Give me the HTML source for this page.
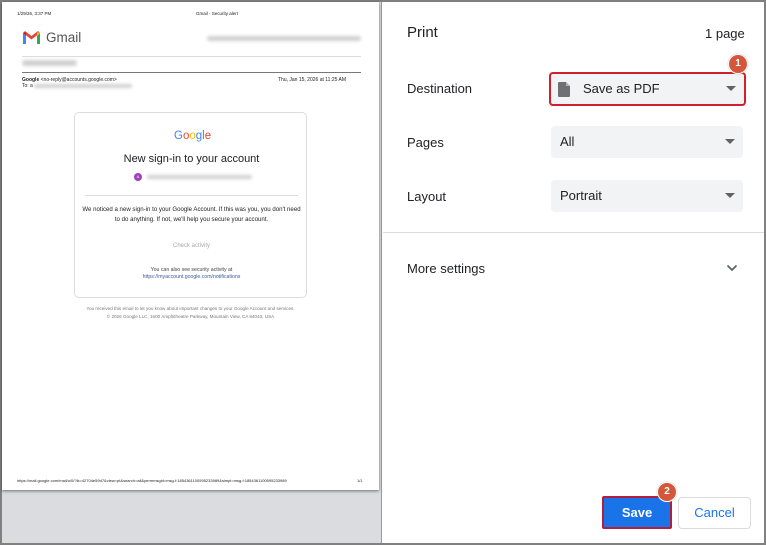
<!DOCTYPE html>
<html><head><meta charset="utf-8"><style>
*{box-sizing:border-box;margin:0;padding:0}
body{width:766px;height:545px;overflow:hidden;background:#808080;font-family:"Liberation Sans",Arial,sans-serif;position:relative}
.frame{position:absolute;left:2px;top:2px;width:762px;height:541px;background:#fff}
.prev{position:absolute;left:0;top:0;width:380px;height:541px;background:#dadce0;border-right:1px solid #9a9a9a}
.page{position:absolute;left:0;top:0;width:377px;height:488px;background:#fff;box-shadow:0 1px 3px rgba(0,0,0,.5)}
.t{position:absolute;white-space:nowrap;color:#222}
.blur{position:absolute;background:#d0d0d0;border-radius:3px;filter:blur(1.5px)}
.card{position:absolute;left:72px;top:110px;width:233px;height:186px;border:1px solid #dadce0;border-radius:5px}
.lbl{position:absolute;left:24px;font-size:13px;color:#202124}
.right{position:absolute;left:381px;top:0;width:381px;height:541px}
.sel{position:absolute;left:168px;width:192px;height:32px;background:#f1f3f4;border-radius:4px;font-size:13px;color:#202124}
.sel span{position:absolute;left:9px;top:8px}
.arr{position:absolute;right:8px;top:13px;width:0;height:0;border-left:5px solid transparent;border-right:5px solid transparent;border-top:5px solid #5f6368}
.badge{position:absolute;width:20px;height:20px;border-radius:50%;background:#d4573a;color:#fff;font-size:10px;font-weight:bold;text-align:center;line-height:18px;border:1.5px solid #fff;box-shadow:0 0 1px #888}
</style></head><body><div class="frame">
<div class="prev"><div class="page">
<div class="t" style="left:15px;top:9px;font-size:4.5px">1/29/26, 3:37 PM</div>
<div class="t" style="left:194px;top:9px;font-size:4.5px">Gmail - Security alert</div>
<svg style="position:absolute;left:20px;top:28px" width="19" height="15" viewBox="0 0 19 15"><path d="M1 3v11h3V6z" fill="#4285f4"/><path d="M15 6v8h3V3z" fill="#34a853"/><path d="M1 3l8.5 6.5L18 3 16 1 9.5 6 3 1z" fill="#ea4335"/><path d="M15 6V2l3 1z" fill="#fbbc04"/><path d="M1 3l3 3V2z" fill="#c5221f"/></svg>
<div class="t" style="left:44px;top:28px;font-size:13.5px;color:#555">Gmail</div>
<div class="blur" style="left:205px;top:34px;width:154px;height:5px"></div>
<div style="position:absolute;left:20px;top:54px;width:339px;border-top:1px solid #ddd"></div>
<div class="blur" style="left:20px;top:58px;width:55px;height:6px"></div>
<div style="position:absolute;left:20px;top:70px;width:339px;border-top:1px solid #777"></div>
<div class="t" style="left:20px;top:75px;font-size:5px"><b>Google</b> &lt;no-reply@accounts.google.com&gt;</div>
<div class="t" style="left:20px;top:81px;font-size:5px">To: a</div>
<div class="blur" style="left:32px;top:82px;width:98px;height:4px"></div>
<div class="t" style="left:276px;top:75px;font-size:5px">Thu, Jan 15, 2026 at 11:25 AM</div>
<div class="card">
<div class="t" style="left:99px;top:17px;font-size:11.5px"><span style="color:#4285f4">G</span><span style="color:#ea4335">o</span><span style="color:#fbbc04">o</span><span style="color:#4285f4">g</span><span style="color:#34a853">l</span><span style="color:#ea4335">e</span></div>
<div class="t" style="left:0;width:233px;text-align:center;top:40px;font-size:11px;color:#202124">New sign-in to your account</div>
<div style="position:absolute;left:59px;top:60px;width:8px;height:8px;border-radius:50%;background:#a040c0;color:#fff;font-size:4px;text-align:center;line-height:8px">A</div>
<div class="blur" style="left:72px;top:62px;width:105px;height:4px"></div>
<div style="position:absolute;left:10px;top:82px;width:213px;border-top:1px solid #ddd"></div>
<div class="t" style="left:6px;top:92px;font-size:6.1px;line-height:9.5px;text-align:center;width:221px;white-space:normal">We noticed a new sign-in to your Google Account. If this was you, you don't need to do anything. If not, we'll help you secure your account.</div>
<div class="t" style="left:0;width:233px;text-align:center;top:130px;font-size:6px;color:#aaa">Check activity</div>
<div class="t" style="left:0;width:233px;text-align:center;top:154px;font-size:5.2px;color:#444">You can also see security activity at</div>
<div class="t" style="left:0;width:233px;text-align:center;top:161px;font-size:5.2px;color:#3a5a9a">https://myaccount.google.com/notifications</div>
</div>
<div class="t" style="left:0;width:377px;text-align:center;top:304px;font-size:4.6px;color:#777">You received this email to let you know about important changes to your Google Account and services.</div>
<div class="t" style="left:0;width:377px;text-align:center;top:312px;font-size:4.6px;color:#777">© 2026 Google LLC, 1600 Amphitheatre Parkway, Mountain View, CA 94043, USA</div>
<div class="t" style="left:15px;top:476px;font-size:4px">https://mail.google.com/mail/u/0/?ik=42704e59d7&amp;view=pt&amp;search=all&amp;permmsgid=msg-f:1854361100595233989&amp;simpl=msg-f:1854361100595233989</div>
<div class="t" style="left:355px;top:476px;font-size:4px">1/1</div>
</div></div>
<div class="right">
<div class="lbl" style="top:22px;font-size:15px">Print</div>
<div class="t" style="left:322px;top:24px;font-size:13px;color:#202124">1 page</div>
<div class="lbl" style="top:79px">Destination</div>
<div class="sel" style="top:70px;height:34px;border:2px solid #d0202c;left:166px;width:197px"><svg style="position:absolute;left:7px;top:8px" width="12" height="15" viewBox="0 0 12 15"><path d="M0 1a1 1 0 0 1 1-1h7l4 4v10a1 1 0 0 1-1 1H1a1 1 0 0 1-1-1z" fill="#6e7174"/><path d="M8 0v4h4z" fill="#b0b3b6"/></svg><span style="left:32px;top:7px">Save as PDF</span><div class="arr" style="right:8px;top:12px"></div></div>
<div class="badge" style="left:345px;top:52px">1</div>
<div class="lbl" style="top:133px">Pages</div>
<div class="sel" style="top:124px"><span>All</span><div class="arr"></div></div>
<div class="lbl" style="top:187px">Layout</div>
<div class="sel" style="top:178px"><span>Portrait</span><div class="arr"></div></div>
<div style="position:absolute;left:0;top:230px;width:381px;border-top:1px solid #dadce0"></div>
<div class="lbl" style="top:259px">More settings</div>
<svg style="position:absolute;left:343px;top:262px" width="12" height="8" viewBox="0 0 12 8"><path d="M1.5 1.5l4.5 4.5 4.5-4.5" stroke="#5f6368" stroke-width="1.8" fill="none"/></svg>
<div style="position:absolute;left:219px;top:494px;width:70px;height:33px;background:#1a73e8;border:2px solid #b0203a;border-radius:2px;color:#fff;font-size:13px;font-weight:bold;text-align:center;line-height:29px">Save</div>
<div class="badge" style="left:274px;top:480px">2</div>
<div style="position:absolute;left:295px;top:495px;width:73px;height:32px;border:1px solid #dadce0;border-radius:4px;color:#1a73e8;font-size:13px;text-align:center;line-height:30px">Cancel</div>
</div>
</div></body></html>
